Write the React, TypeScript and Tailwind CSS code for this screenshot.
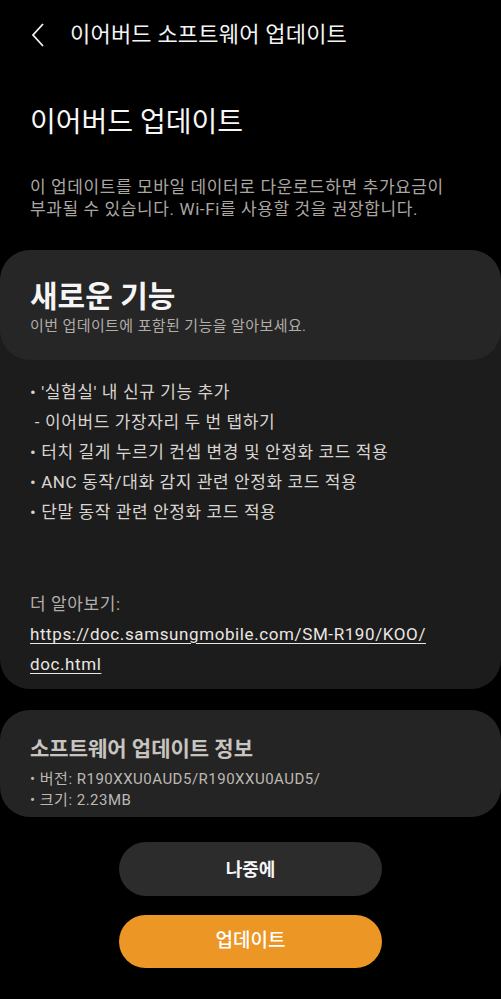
export default function App() {
  const features = [
    "• '실험실' 내 신규 기능 추가",
    " - 이어버드 가장자리 두 번 탭하기",
    "• 터치 길게 누르기 컨셉 변경 및 안정화 코드 적용",
    "• ANC 동작/대화 감지 관련 안정화 코드 적용",
    "• 단말 동작 관련 안정화 코드 적용",
  ];

  return (
    <div
      className="w-[501px] h-[999px] bg-black text-white overflow-hidden flex flex-col"
      style={{ fontFamily: 'Roboto, "Noto Sans CJK KR", sans-serif' }}
    >
      {/* top bar */}
      <div className="h-[70px] flex items-center px-[31px] shrink-0">
        <svg width="16" height="24" viewBox="0 0 16 24" className="shrink-0">
          <path d="M12 1 L2 12 L12 23" fill="none" stroke="#f2f2f2" strokeWidth="1.8" strokeLinejoin="miter" />
        </svg>
        <div className="ml-[23px] text-[22px] leading-[30px] tracking-[0.2px] text-[#f4f4f4]">이어버드 소프트웨어 업데이트</div>
      </div>

      <div className="px-[30px] mt-[35px] text-[28px] leading-[36px] text-[#f7f7f7]">이어버드 업데이트</div>
      <div className="px-[30px] mt-[35px] text-[17px] leading-[22px] tracking-[0.6px] text-[#aba6a2]">
        이 업데이트를 모바일 데이터로 다운로드하면 추가요금이
        <br />
        부과될 수 있습니다. Wi-Fi를 사용할 것을 권장합니다.
      </div>

      {/* new features card */}
      <div className="mt-[30px] rounded-[30px] bg-[#1c1c1c] overflow-hidden shrink-0">
        <div className="bg-[#262626] rounded-[30px] px-[30px] pt-[29px] pb-[24px] h-[110px]">
          <div className="text-[30px] leading-[36px] font-bold text-[#f5f5f5]">새로운 기능</div>
          <div className="mt-[1px] text-[15px] leading-[20px] tracking-[0.4px] text-[#b1aca8]">이번 업데이트에 포함된 기능을 알아보세요.</div>
        </div>
        <div className="px-[30px] pt-[17px] pb-[10px]">
          {features.map((f, i) => (
            <div key={i} className="text-[17px] leading-[30px] tracking-[0.6px] text-[#d9d4d0] whitespace-pre">
              {f}
            </div>
          ))}
          <div className="mt-[62px] text-[17px] leading-[30px] tracking-[0.6px] text-[#b3aeaa]">더 알아보기:</div>
          <div className="text-[17px] leading-[30px] tracking-[0.6px] text-[#ebe6e2] underline underline-offset-[3px]">
            https://doc.samsungmobile.com/SM-R190/KOO/
            <br />
            doc.html
          </div>
        </div>
      </div>

      {/* software info card */}
      <div className="mt-[21px] rounded-[30px] bg-[#242424] px-[30px] pt-[25px] h-[107px] shrink-0">
        <div className="text-[21px] leading-[28px] font-semibold text-[#c9c4c0]">소프트웨어 업데이트 정보</div>
        <div className="mt-[6px] text-[15px] leading-[21px] tracking-[0.5px] text-[#bdb8b4]">• 버전: R190XXU0AUD5/R190XXU0AUD5/</div>
        <div className="text-[15px] leading-[21px] tracking-[0.5px] text-[#bdb8b4]">• 크기: 2.23MB</div>
      </div>

      {/* buttons */}
      <div className="mt-[25px] flex flex-col items-center gap-[19px]">
        <button className="w-[263px] h-[54px] rounded-full bg-[#2c2c2c] text-[18px] font-bold text-[#f5f5f5]">
          나중에
        </button>
        <button className="w-[263px] h-[53px] rounded-full bg-[#ec9626] text-[19px] font-medium text-white">
          업데이트
        </button>
      </div>
    </div>
  );
}
